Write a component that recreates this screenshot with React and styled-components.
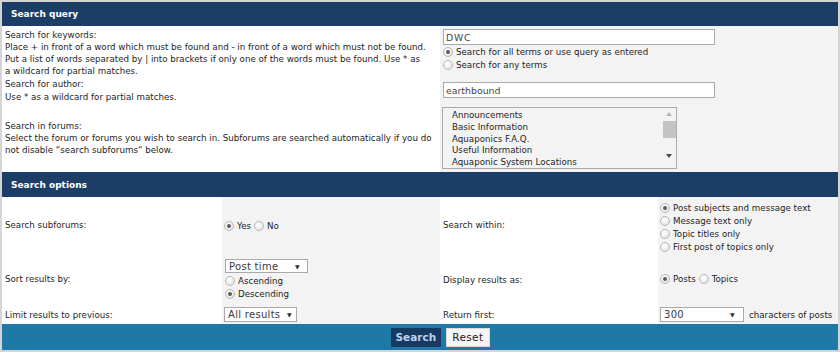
import styled, { createGlobalStyle } from "styled-components"

const GlobalStyle = createGlobalStyle`
  html, body { margin: 0; padding: 0; }
  body { background: #d5d5d5; font-family: "DejaVu Sans", Verdana, sans-serif; color: #1e1e1e; }
`

const Page = styled.div`
  width: 840px;
  height: 352px;
  box-sizing: border-box;
  padding: 2px;
  background: #d5d5d5;
  font-size: 8.7px;
`
const Panel = styled.div`
  display: flex;
  flex-direction: column;
`
const SectionHead = styled.div`
  height: ${p => p.h}px;
  background: #1c3e66;
  color: #fff;
  font-weight: bold;
  font-size: 9px;
  padding-left: 9px;
  display: flex;
  align-items: center;
`
const QueryRow = styled.div`
  display: grid;
  grid-template-columns: 438px 1fr;
  height: ${p => p.h}px;
`
const LabelCell = styled.div`
  background: #fff;
  padding: ${p => p.pt || 0}px 4px 0 3px;
  line-height: ${p => p.lh || 12}px;
  white-space: nowrap;
`
const FieldCell = styled.div`
  background: #f3f3f3;
  padding: ${p => p.pt || 0}px 0 0 ${p => p.pl || 1}px;
  display: flex;
  flex-direction: column;
  align-items: flex-start;
`
const OptRow = styled.div`
  display: grid;
  grid-template-columns: 220px 218px 218px 1fr;
  height: ${p => p.h}px;
`
const OptLabel = styled.div`
  background: #fff;
  padding: ${p => p.pt || 0}px 0 ${p => p.pb || 0}px 3px;
  line-height: 12px;
  display: flex;
  align-items: ${p => (p.center ? "center" : "flex-start")};
`
const OptField = styled.div`
  background: #f3f3f3;
  padding: ${p => p.pt || 0}px 0 ${p => p.pb || 0}px ${p => p.pl || 2}px;
  display: flex;
  flex-direction: ${p => (p.row ? "row" : "column")};
  align-items: ${p => (p.row ? (p.top ? "flex-start" : "center") : "flex-start")};
  justify-content: ${p => (p.center ? "center" : "flex-start")};
`
const TextInput = styled.input`
  width: 272px;
  height: 16px;
  box-sizing: border-box;
  border: 1px solid #a9a9a9;
  background: #fff;
  padding: 0 2px;
  margin: 0;
  font-family: "DejaVu Sans", Verdana, sans-serif;
  font-size: 9.4px;
  letter-spacing: ${p => p.ls || 0}px;
  color: #444;
  outline: none;
`
const RadioLine = styled.label`
  display: flex;
  align-items: center;
  height: ${p => p.h || 13}px;
  margin-right: ${p => p.mr || 0}px;
`
const RadioDot = styled.span`
  width: 10px;
  height: 10px;
  box-sizing: border-box;
  border-radius: 50%;
  border: 1px solid #b8b8b8;
  background: radial-gradient(circle at 40% 35%, #ffffff 0%, #eeeeee 55%, #d6d6d6 100%);
  margin-right: 3px;
  display: flex;
  align-items: center;
  justify-content: center;
  flex-shrink: 0;
  &::after {
    content: "";
    width: 4px;
    height: 4px;
    border-radius: 50%;
    background: ${p => (p.on ? "#5a5a5a" : "transparent")};
  }
`
const Radio = ({ on, children, h, mr }) => (
  <RadioLine h={h} mr={mr}>
    <RadioDot on={on ? 1 : 0} />
    <span>{children}</span>
  </RadioLine>
)
const ListBox = styled.div`
  width: 235px;
  height: 62px;
  box-sizing: border-box;
  border: 1px solid #ababab;
  background: #f3f3f3;
  display: flex;
  margin-left: 1px;
`
const ListItems = styled.div`
  flex: 1;
  padding: 2px 0 0 9px;
  line-height: 11.8px;
  white-space: nowrap;
  overflow: hidden;
`
const ScrollBar = styled.div`
  width: 14px;
  display: flex;
  flex-direction: column;
  align-items: center;
  padding-top: 4px;
`
const Arrow = styled.div`
  width: 0;
  height: 0;
  border-left: 3px solid transparent;
  border-right: 3px solid transparent;
  ${p => (p.up ? "border-bottom: 4px solid #b5b5b5;" : "border-top: 4px solid #4a4a4a;")}
`
const Thumb = styled.div`
  width: 13px;
  height: 17px;
  background: #c3c3c3;
  margin: 5px 0 16px;
`
const SelectBox = styled.div`
  width: ${p => p.w}px;
  height: ${p => p.h || 15}px;
  box-sizing: border-box;
  border: 1px solid #a9a9a9;
  background: #fff;
  display: flex;
  align-items: center;
  justify-content: space-between;
  padding: 0 ${p => p.pr || 6}px 0 3px;
  margin-bottom: ${p => p.mb || 0}px;
  font-size: 10px;
  letter-spacing: 0.3px;
  color: #3a3a3a;
  flex-shrink: 0;
`
const Caret = styled.span`
  font-size: 6px;
  color: #333;
`
const Suffix = styled.span`
  margin-left: 5px;
`
const Footer = styled.div`
  height: 26px;
  background: #1f79a7;
  display: flex;
  align-items: center;
  justify-content: center;
  gap: 5px;
  padding-left: 40px;
`
const Button = styled.button`
  height: 19px;
  margin: 0;
  padding: 0 ${p => p.px}px;
  border: ${p => (p.primary ? "none" : "1px solid #d9d9d9")};
  background: ${p => (p.primary ? "#173a62" : "#f6f6f6")};
  color: ${p => (p.primary ? "#bad3ee" : "#222")};
  font-family: "DejaVu Sans", Verdana, sans-serif;
  font-size: 10.5px;
  font-weight: ${p => (p.primary ? "bold" : "normal")};
  letter-spacing: ${p => (p.primary ? 0 : 0.4)}px;
`

export default function App() {
  return (
    <Page>
      <GlobalStyle />
      <Panel>
        <SectionHead h={24}>Search query</SectionHead>
        <QueryRow h={50}>
          <LabelCell pt={3}>
            Search for keywords:<br />
            Place + in front of a word which must be found and - in front of a word which must not be found.<br />
            Put a list of words separated by | into brackets if only one of the words must be found. Use * as<br />
            a wildcard for partial matches.
          </LabelCell>
          <FieldCell pt={3} pl={3}>
            <TextInput defaultValue="DWC" ls={0.8} />
            <Radio on>Search for all terms or use query as entered</Radio>
            <Radio>Search for any terms</Radio>
          </FieldCell>
        </QueryRow>
        <QueryRow h={26}>
          <LabelCell pt={2} lh={13}>
            Search for author:<br />
            Use * as a wildcard for partial matches.
          </LabelCell>
          <FieldCell pt={6} pl={3}>
            <TextInput defaultValue="earthbound" />
          </FieldCell>
        </QueryRow>
        <QueryRow h={70}>
          <LabelCell pt={18}>
            Search in forums:<br />
            Select the forum or forums you wish to search in. Subforums are searched automatically if you do<br />
            not disable “search subforums“ below.
          </LabelCell>
          <FieldCell pt={5} pl={1}>
            <ListBox>
              <ListItems>
                <div>Announcements</div>
                <div>Basic Information</div>
                <div>Aquaponics F.A.Q.</div>
                <div>Useful Information</div>
                <div>Aquaponic System Locations</div>
              </ListItems>
              <ScrollBar>
                <Arrow up />
                <Thumb />
                <Arrow />
              </ScrollBar>
            </ListBox>
          </FieldCell>
        </QueryRow>
        <SectionHead h={25}>Search options</SectionHead>
        <OptRow h={61}>
          <OptLabel center pb={5}>Search subforums:</OptLabel>
          <OptField row pl={2} pb={3}>
            <Radio on mr={3}>Yes</Radio>
            <Radio>No</Radio>
          </OptField>
          <OptLabel center pb={5}>Search within:</OptLabel>
          <OptField center pl={2}>
            <Radio on>Post subjects and message text</Radio>
            <Radio>Message text only</Radio>
            <Radio>Topic titles only</Radio>
            <Radio>First post of topics only</Radio>
          </OptField>
        </OptRow>
        <OptRow h={47}>
          <OptLabel pt={15}>Sort results by:</OptLabel>
          <OptField pt={1} pl={3}>
            <SelectBox w={83} h={14} pr={7} mb={2}>Post time<Caret>▼</Caret></SelectBox>
            <Radio h={12.5}>Ascending</Radio>
            <Radio on h={12.5}>Descending</Radio>
          </OptField>
          <OptLabel pt={16}>Display results as:</OptLabel>
          <OptField row top pt={15} pl={2}>
            <Radio on mr={3} h={12}>Posts</Radio>
            <Radio h={12}>Topics</Radio>
          </OptField>
        </OptRow>
        <OptRow h={19}>
          <OptLabel center>Limit results to previous:</OptLabel>
          <OptField row pl={2}>
            <SelectBox w={73} pr={4}>All results<Caret>▼</Caret></SelectBox>
          </OptField>
          <OptLabel center>Return first:</OptLabel>
          <OptField row pl={2}>
            <SelectBox w={84} pr={8}>300<Caret>▼</Caret></SelectBox>
            <Suffix>characters of posts</Suffix>
          </OptField>
        </OptRow>
        <Footer>
          <Button primary px={5}>Search</Button>
          <Button px={5}>Reset</Button>
        </Footer>
      </Panel>
    </Page>
  )
}
